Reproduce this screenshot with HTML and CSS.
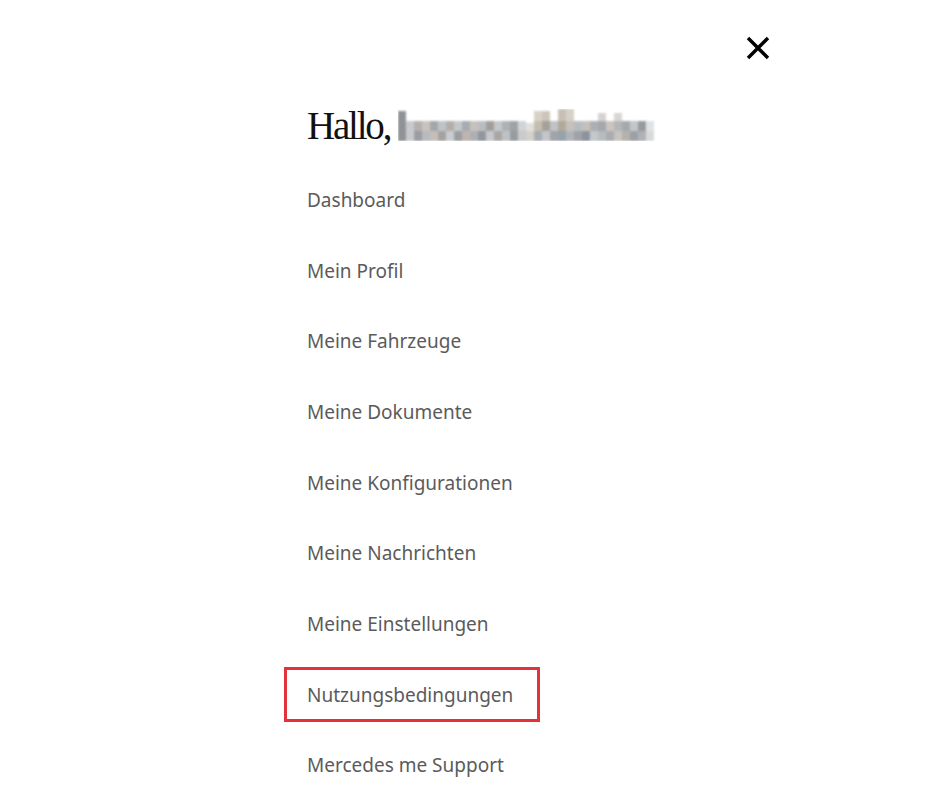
FILE: index.html
```html
<!DOCTYPE html>
<html lang="de">
<head>
<meta charset="utf-8">
<title>Mercedes me – Menü</title>
<link rel="stylesheet" href="styles.css">
</head>
<body>
<div class="panel">
  <div class="topbar">
    <button class="close" aria-label="Schließen">
      <svg width="24" height="24" viewBox="0 0 24 24"><path d="M2 2 L22 22 M22 2 L2 22" stroke="#000" stroke-width="3.4" fill="none"/></svg>
    </button>
  </div>
  <h1 class="greeting"><span class="hello">Hallo,</span><span class="name" aria-label="verpixelter Name"><svg width="258" height="32" viewBox="0 0 258 32">
    <defs><filter id="b" x="-5%" y="-20%" width="110%" height="140%"><feGaussianBlur stdDeviation="1.2"/></filter></defs>
    <g filter="url(#b)">
      <rect x="0" y="2" width="8" height="30" fill="#8f9296"/>
      <rect x="8" y="12" width="8" height="20" fill="#c7c9cc"/>
      <rect x="16" y="12" width="8" height="10" fill="#b4b0ad"/><rect x="16" y="22" width="8" height="10" fill="#9a9da2"/>
      <rect x="24" y="12" width="8" height="10" fill="#c9c3bd"/><rect x="24" y="22" width="8" height="10" fill="#b7bbc0"/>
      <rect x="32" y="12" width="8" height="10" fill="#a3a6ab"/><rect x="32" y="22" width="8" height="10" fill="#c4bfb9"/>
      <rect x="40" y="12" width="8" height="10" fill="#bfc3c8"/><rect x="40" y="22" width="8" height="10" fill="#a5a3a2"/>
      <rect x="48" y="12" width="8" height="10" fill="#b3aea9"/><rect x="48" y="22" width="8" height="10" fill="#c9ccd0"/>
      <rect x="56" y="12" width="8" height="10" fill="#c4c6c9"/><rect x="56" y="22" width="8" height="10" fill="#9a9da1"/>
      <rect x="64" y="12" width="8" height="10" fill="#a6acb2"/><rect x="64" y="22" width="8" height="10" fill="#bdb5ae"/>
      <rect x="72" y="12" width="8" height="10" fill="#c7c1ba"/><rect x="72" y="22" width="8" height="10" fill="#acb0b5"/>
      <rect x="80" y="12" width="8" height="10" fill="#b9bdc2"/><rect x="80" y="22" width="8" height="10" fill="#93969b"/>
      <rect x="88" y="12" width="8" height="10" fill="#a29e9b"/><rect x="88" y="22" width="8" height="10" fill="#c6c8cb"/>
      <rect x="96" y="12" width="8" height="10" fill="#c3c7cc"/><rect x="96" y="22" width="8" height="10" fill="#aaa6a2"/>
      <rect x="104" y="12" width="8" height="10" fill="#aeb1b5"/><rect x="104" y="22" width="8" height="10" fill="#bfc2c5"/>
      <rect x="112" y="12" width="8" height="10" fill="#9fa2a6"/><rect x="112" y="22" width="8" height="10" fill="#989ba0"/>
      <rect x="120" y="12" width="8" height="10" fill="#d2d3d5"/><rect x="120" y="22" width="8" height="10" fill="#c9cacc"/>
      <rect x="128" y="14" width="8" height="8" fill="#e2e0dc"/><rect x="128" y="22" width="8" height="10" fill="#d4d0cb"/>
      <rect x="136" y="2" width="8" height="10" fill="#d8d1c7"/>
      <rect x="136" y="12" width="8" height="10" fill="#c4bdb2"/><rect x="136" y="22" width="8" height="10" fill="#a6acb2"/>
      <rect x="144" y="2" width="8" height="10" fill="#cbc5bb"/>
      <rect x="144" y="12" width="8" height="10" fill="#a5a098"/><rect x="144" y="22" width="8" height="10" fill="#c3c6ca"/>
      <rect x="152" y="12" width="8" height="10" fill="#bfc2c6"/><rect x="152" y="22" width="8" height="10" fill="#a1a4a8"/>
      <rect x="160" y="0" width="8" height="12" fill="#c8c0b4"/>
      <rect x="160" y="12" width="8" height="10" fill="#b1a99b"/><rect x="160" y="22" width="8" height="10" fill="#98a2ac"/>
      <rect x="168" y="0" width="8" height="12" fill="#d6d0c8"/>
      <rect x="168" y="12" width="8" height="10" fill="#c6c1bb"/><rect x="168" y="22" width="8" height="10" fill="#b0b4b9"/>
      <rect x="176" y="12" width="8" height="10" fill="#b8bcc1"/><rect x="176" y="22" width="8" height="10" fill="#9fa3a8"/>
      <rect x="184" y="12" width="8" height="10" fill="#c6c0ba"/><rect x="184" y="22" width="8" height="10" fill="#8a939e"/>
      <rect x="192" y="12" width="8" height="10" fill="#acafb3"/><rect x="192" y="22" width="8" height="10" fill="#c5c7ca"/>
      <rect x="200" y="4" width="8" height="8" fill="#d5d3d0"/>
      <rect x="200" y="12" width="8" height="10" fill="#a4a8ad"/><rect x="200" y="22" width="8" height="10" fill="#b7bbbf"/>
      <rect x="208" y="12" width="8" height="10" fill="#cbc5bf"/><rect x="208" y="22" width="8" height="10" fill="#aaacae"/>
      <rect x="216" y="4" width="8" height="8" fill="#d8d6d3"/>
      <rect x="216" y="12" width="8" height="10" fill="#b3b6ba"/><rect x="216" y="22" width="8" height="10" fill="#c8c4c0"/>
      <rect x="224" y="12" width="8" height="10" fill="#a5a9ae"/><rect x="224" y="22" width="8" height="10" fill="#b5b1ad"/>
      <rect x="232" y="12" width="8" height="10" fill="#c2c5c9"/><rect x="232" y="22" width="8" height="10" fill="#9da0a4"/>
      <rect x="240" y="12" width="8" height="10" fill="#979a9e"/><rect x="240" y="22" width="8" height="10" fill="#afb2b5"/>
      <rect x="248" y="12" width="8" height="10" fill="#e1e2e3"/><rect x="248" y="22" width="8" height="10" fill="#d8d9da"/>
    </g>
  </svg></span></h1>
  <ul class="menu">
    <li><a href="#">Dashboard</a></li>
    <li><a href="#">Mein Profil</a></li>
    <li><a href="#">Meine Fahrzeuge</a></li>
    <li><a href="#">Meine Dokumente</a></li>
    <li><a href="#">Meine Konfigurationen</a></li>
    <li><a href="#">Meine Nachrichten</a></li>
    <li><a href="#">Meine Einstellungen</a></li>
    <li><a href="#" class="highlight">Nutzungsbedingungen</a></li>
    <li><a href="#">Mercedes me Support</a></li>
  </ul>
</div>
</body>
</html>
```

FILE: styles.css
```css
html, body {
  margin: 0;
  padding: 0;
  background: #fff;
}
body {
  font-family: "Noto Sans", "Liberation Sans", sans-serif;
  color: #5b5b5b;
}
.panel {
  width: 464px;
  margin-left: 307px;
}
.topbar {
  display: flex;
  justify-content: flex-end;
  height: 96px;
  align-items: center;
}
.close {
  border: 0;
  background: none;
  padding: 0;
  width: 24px;
  height: 24px;
  margin-right: 1px;
  cursor: pointer;
  display: flex;
}
.greeting {
  margin: 0;
  height: 69px;
  display: flex;
  align-items: flex-start;
  padding-top: 8px;
  box-sizing: border-box;
  font-family: "Liberation Serif", "Times New Roman", serif;
  font-weight: 400;
  font-size: 39px;
  line-height: 44px;
  color: #111;
}
.hello {
  letter-spacing: -2.2px;
}
.name {
  display: inline-flex;
  margin-left: 8px;
  margin-top: 5px;
}
.menu {
  list-style: none;
  margin: 0;
  padding: 0;
}
.menu li {
  height: 70.6px;
  display: flex;
  align-items: center;
}
.menu a {
  color: #5b5b5b;
  text-decoration: none;
  font-size: 19px;
  line-height: 26px;
}
.menu a.highlight {
  border: 3px solid #e4323a;
  padding: 12px 24px 11px 20px;
  margin-left: -23px;
}
```
